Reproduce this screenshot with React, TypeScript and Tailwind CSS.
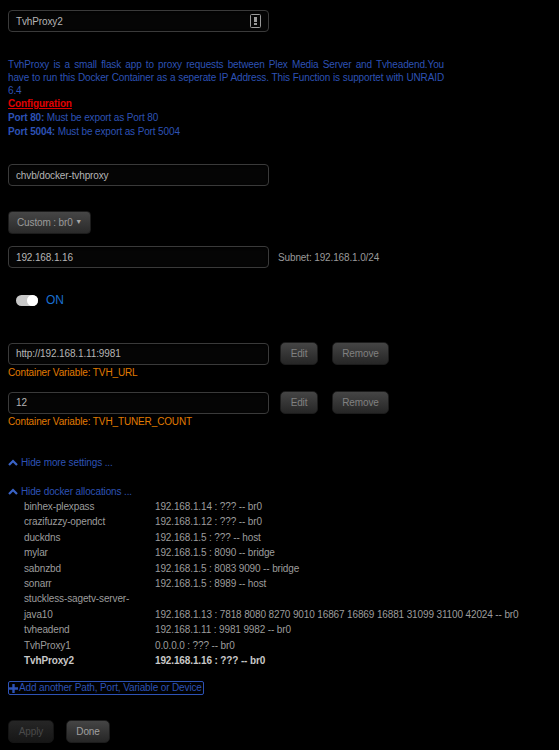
import React from 'react';

const allocations: { name: string; value: string; bold?: boolean }[] = [
    { name: 'binhex-plexpass', value: '192.168.1.14 : ??? -- br0' },
    { name: 'crazifuzzy-opendct', value: '192.168.1.12 : ??? -- br0' },
    { name: 'duckdns', value: '192.168.1.5 : ??? -- host' },
    { name: 'mylar', value: '192.168.1.5 : 8090 -- bridge' },
    { name: 'sabnzbd', value: '192.168.1.5 : 8083 9090 -- bridge' },
    { name: 'sonarr', value: '192.168.1.5 : 8989 -- host' },
    { name: 'stuckless-sagetv-server-java10', value: '192.168.1.13 : 7818 8080 8270 9010 16867 16869 16881 31099 31100 42024 -- br0' },
    { name: 'tvheadend', value: '192.168.1.11 : 9981 9982 -- br0' },
    { name: 'TvhProxy1', value: '0.0.0.0 : ??? -- br0' },
    { name: 'TvhProxy2', value: '192.168.1.16 : ??? -- br0', bold: true },
];

const inputCls =
    'w-[261px] h-[22px] rounded-[4px] border border-[#3a3a3a] bg-[#050505] shadow-[inset_0_1px_3px_rgba(0,0,0,0.9)] px-[7px] flex items-center text-[#b5b5b5]';

const btnCls =
    'h-[23px] rounded-[5px] border border-[#1c1c1c] bg-gradient-to-b from-[#454545] to-[#262626] text-[#808080] flex items-center justify-center';

function Chevron() {
    return (
        <svg width="10" height="7" viewBox="0 0 10 7" className="mr-[3px]">
            <path d="M1 6 L5 2 L9 6" fill="none" stroke="#3a63c6" strokeWidth="2.2" />
        </svg>
    );
}

export default function App() {
    return (
        <div className="min-h-[750px] bg-black px-2 pt-[10px] font-['Liberation_Sans',Arial,sans-serif] text-[10px] tracking-[-0.13px]">
            {/* Name */}
            <div className={inputCls + ' justify-between'}>
                <span>TvhProxy2</span>
                <svg width="11" height="14" viewBox="0 0 11 14">
                    <rect x="0.5" y="0.5" width="10" height="13" rx="1" fill="none" stroke="#9a9a9a" />
                    <rect x="4" y="3" width="3" height="5" fill="#9a9a9a" />
                    <rect x="4" y="9" width="3" height="2" fill="#9a9a9a" />
                </svg>
            </div>

            {/* Overview */}
            <div className="mt-[26px] w-[436px] text-[#2d52b5] leading-[13px]">
                <p className="text-justify">
                    TvhProxy is a small flask app to proxy requests between Plex Media Server and Tvheadend.You have to run this Docker Container as a seperate IP Address. This Function is supportet with UNRAID 6.4
                </p>
                <p className="leading-[14px]">
                    <span className="font-bold text-[#e00000] underline">Configuration</span>
                </p>
                <p className="leading-[14px]"><b>Port 80:</b> Must be export as Port 80</p>
                <p className="leading-[14px]"><b>Port 5004:</b> Must be export as Port 5004</p>
            </div>

            {/* Repository */}
            <div className={inputCls + ' mt-[25px]'}>chvb/docker-tvhproxy</div>

            {/* Network */}
            <div className="mt-[25px] w-[83px] h-[23px] rounded-[4px] border border-[#1c1c1c] bg-gradient-to-b from-[#464646] to-[#2a2a2a] flex items-center justify-between px-[8px] text-[#9a9a9a] whitespace-nowrap">
                <span>Custom : br0</span>
                <span className="text-[7px] text-[#aaa]">▼</span>
            </div>

            <div className="mt-[12px] flex items-center">
                <div className={inputCls}>192.168.1.16</div>
                <span className="ml-[9px] text-[#9a9a9a]">Subnet: 192.168.1.0/24</span>
            </div>

            {/* Toggle */}
            <div className="mt-[23px] ml-[8px] flex items-center">
                <div className="w-[22px] h-[11px] rounded-full bg-[#c8c8c8] relative">
                    <div className="absolute right-0 top-0 w-[11px] h-[11px] rounded-full bg-white" />
                </div>
                <span className="ml-[8px] text-[12px] text-[#1a6fd0]">ON</span>
            </div>

            {/* Variables */}
            <div className="mt-[33px] flex flex-col gap-[12px]">
                {[
                    { v: 'http://192.168.1.11:9981', l: 'Container Variable: TVH_URL' },
                    { v: '12', l: 'Container Variable: TVH_TUNER_COUNT' },
                ].map(row => (
                    <div key={row.l}>
                        <div className="flex items-center">
                            <div className={inputCls}>{row.v}</div>
                            <div className={btnCls + ' ml-[11px] w-[38px]'}>Edit</div>
                            <div className={btnCls + ' ml-[14px] w-[57px]'}>Remove</div>
                        </div>
                        <div className="text-[#e07b00] leading-[13px] mt-[1px]">{row.l}</div>
                    </div>
                ))}
            </div>

            {/* Settings toggles */}
            <div className="mt-[27px] flex items-center text-[#2d52b5]">
                <Chevron />
                Hide more settings ...
            </div>
            <div className="mt-[14px] flex items-center text-[#2d52b5]">
                <Chevron />
                Hide docker allocations ...
            </div>

            <div className="pl-[16px] text-[#9c9c9c] leading-[15.4px]">
                {allocations.map(a => (
                    <div key={a.name} className={'flex items-end ' + (a.bold ? 'font-bold text-[#c8c8c8]' : '')}>
                        <div className="w-[131px] shrink-0 whitespace-nowrap">
                            {a.name === 'stuckless-sagetv-server-java10' ? (
                                <>stuckless-sagetv-server-<br />java10</>
                            ) : (
                                a.name
                            )}
                        </div>
                        <div className="whitespace-nowrap">{a.value}</div>
                    </div>
                ))}
            </div>

            {/* Add another */}
            <div className="mt-[13px] inline-flex items-center border border-[#2d52b5] rounded-[2px] text-[#2d52b5] leading-[12px] pr-[1px]">
                <svg width="9" height="9" viewBox="0 0 9 9" className="mr-[1px]">
                    <path d="M4.5 0 V9 M0 4.5 H9" stroke="#2d52b5" strokeWidth="2.4" />
                </svg>
                Add another Path, Port, Variable or Device
            </div>

            {/* Buttons */}
            <div className="mt-[23px] flex gap-[12px] pb-[6px]">
                <div className="h-[23px] w-[46px] rounded-[5px] border border-[#141414] bg-gradient-to-b from-[#262626] to-[#161616] text-[#4a4a4a] flex items-center justify-center">Apply</div>
                <div className={btnCls + ' w-[44px] text-[#a0a0a0]'}>Done</div>
            </div>
        </div>
    );
}
